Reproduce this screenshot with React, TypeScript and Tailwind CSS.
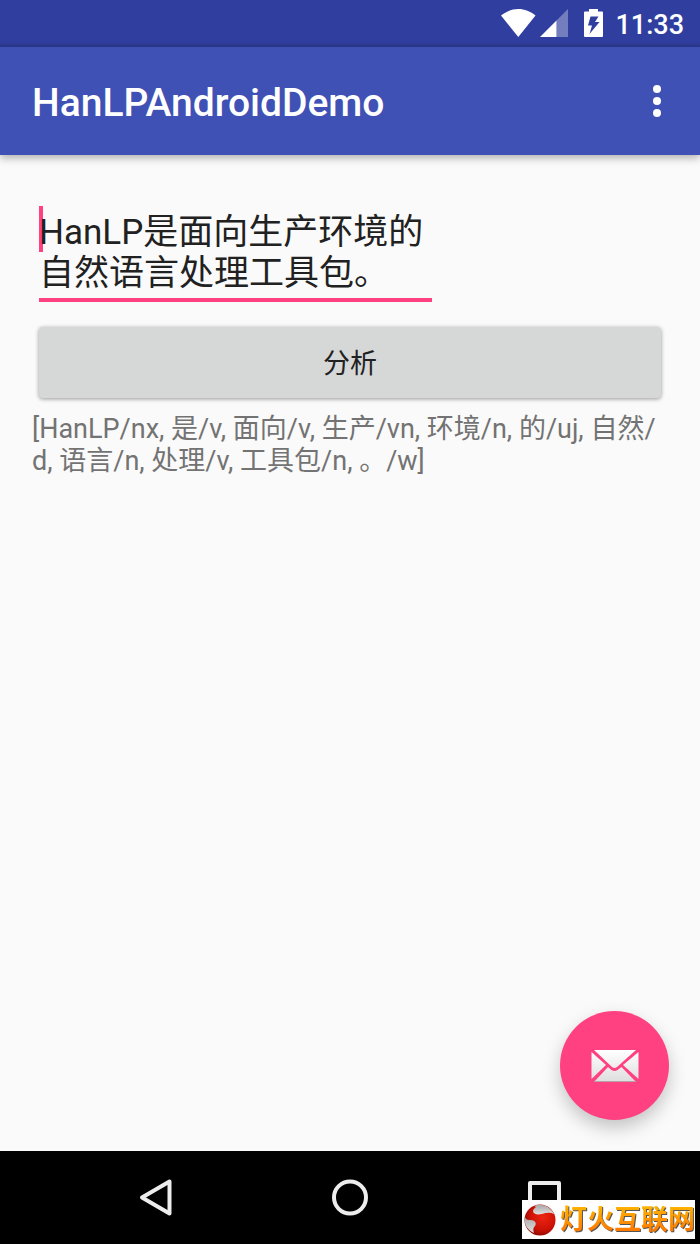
import { useState } from "react";

const RESULT =
  "[HanLP/nx, 是/v, 面向/v, 生产/vn, 环境/n, 的/uj, 自然/d, 语言/n, 处理/v, 工具包/n, 。/w]";

function StatusBar() {
  return (
    <div className="h-[47px] shrink-0 bg-gradient-to-b from-[#303f9f] from-90% to-[#2a378b] pr-4 pb-0.5 flex items-center justify-end text-white">
      <svg className="w-[35px] h-7" viewBox="0 0 35 28" fill="currentColor" aria-label="Wi-Fi">
        <path d="M0 6.600C5 2.400 11 0 17.300 0S29.600 2.400 34.500 6.600L17.300 28Z" />
      </svg>
      <svg className="ml-1 w-7 h-7" viewBox="0 0 28 28" fill="currentColor" aria-label="Signal">
        <path d="M28 0V28H16.500V11.500Z" opacity=".33" />
        <path d="M0 28L16.500 11.500V28Z" />
      </svg>
      <svg className="ml-4 w-[19px] h-7" viewBox="0 0 19 28" fill="currentColor" aria-label="Battery">
        <path
          fillRule="evenodd"
          d="M5 0H14V2.500H18Q19 2.500 19 3.500V27Q19 28 18 28H1Q0 28 0 27V3.500Q0 2.500 1 2.500H5ZM6.500 7.500L4 16.500H8L5.500 25L15.500 13H11L14.500 7.500Z"
        />
      </svg>
      <span className="ml-3 pt-1 text-[27px] leading-8 font-medium">11:33</span>
    </div>
  );
}

function Toolbar() {
  return (
    <header className="relative h-[108px] shrink-0 bg-[#3f51b5] pl-8 pr-7 flex items-center justify-between text-white shadow-[0_3px_8px_rgba(0,0,0,0.3)]">
      <h1 className="pt-1 text-[39px] leading-[46px] font-medium">HanLPAndroidDemo</h1>
      <button type="button" aria-label="More options" className="w-[30px] h-12 flex items-center justify-center">
        <svg className="w-2 h-8" viewBox="0 0 8 32" fill="currentColor">
          <circle cx="4" cy="4" r="4" />
          <circle cx="4" cy="16" r="4" />
          <circle cx="4" cy="28" r="4" />
        </svg>
      </button>
    </header>
  );
}

function MailIcon() {
  return (
    <svg className="w-12 h-8" viewBox="0 0 48 32">
      <defs>
        <linearGradient id="paper" x1="0" y1="0" x2="0" y2="32" gradientUnits="userSpaceOnUse">
          <stop offset="0" stopColor="#fff" />
          <stop offset="1" stopColor="#dedede" />
        </linearGradient>
      </defs>
      <g fill="url(#paper)">
        <path d="M3 0H45L26 17Q23.500 19 21 17Z" />
        <path d="M.5 2L15 15L.5 29Z" />
        <path d="M47.500 2L32 15L47.500 29Z" />
        <path d="M3 32L17 17L20.500 20Q23.500 22 26.500 20L30.500 17L45 32Z" />
      </g>
      <path d="M3 31.500H45" stroke="#b5a3a9" />
    </svg>
  );
}

function Watermark() {
  return (
    <div className="absolute right-[5px] bottom-[5px] h-[39px] w-[173px] bg-white pl-0.5 flex items-center">
      <svg className="w-8 h-8 shrink-0" viewBox="0 0 32 32">
        <defs>
          <radialGradient id="red" cx=".6" cy=".4" r=".7">
            <stop offset="0" stopColor="#ee2412" />
            <stop offset=".6" stopColor="#cc1206" />
            <stop offset="1" stopColor="#7d0700" />
          </radialGradient>
          <linearGradient id="silver" x1="0" y1="0" x2="0" y2="1">
            <stop offset="0" stopColor="#a8a8a8" />
            <stop offset="1" stopColor="#dedede" />
          </linearGradient>
        </defs>
        <circle cx="16" cy="16" r="15.500" fill="url(#red)" />
        <path d="M10 2C17-1 26 2 30 10C26 8 22 9 18 10C13 11 9 10 9 7C9 5 11 4 12 3Z" fill="url(#silver)" />
        <path d="M1 12C1 15 3 16 6 16C11 16 13 19 11 22C9 24 9 26 10 29C4 27-1 20 1 12Z" fill="url(#silver)" />
      </svg>
      <span className="ml-1 whitespace-nowrap text-[27px] leading-8 font-bold text-transparent bg-clip-text bg-gradient-to-b from-[#ffb800] to-[#ff6a00] drop-shadow-[1px_1px_0_#555]">
        灯火互联网
      </span>
    </div>
  );
}

function NavigationBar() {
  return (
    <nav className="relative h-[93px] shrink-0 bg-black flex items-center justify-center gap-[154px] text-[#ededed]">
      <button type="button" aria-label="Back">
        <svg className="w-10 h-10" viewBox="0 0 40 40" fill="none" stroke="currentColor" strokeWidth="4" strokeLinejoin="round">
          <path d="M6 19.500L33.500 3.500V35.500Z" />
        </svg>
      </button>
      <button type="button" aria-label="Home">
        <svg className="w-10 h-10" viewBox="0 0 40 40" fill="none" stroke="currentColor" strokeWidth="4">
          <circle cx="20" cy="19.500" r="16" />
        </svg>
      </button>
      <button type="button" aria-label="Recent apps">
        <svg className="w-10 h-10" viewBox="0 0 40 40" fill="none" stroke="currentColor" strokeWidth="4" strokeLinejoin="round">
          <rect x="6" y="5" width="29" height="29" />
        </svg>
      </button>
      <Watermark />
    </nav>
  );
}

export default function App() {
  const [text, setText] = useState("HanLP是面向生产环境的自然语言处理工具包。");

  return (
    <div className="min-h-screen flex flex-col bg-[#fafafa] font-[Roboto,'Noto_Sans_CJK_SC',sans-serif]">
      <StatusBar />
      <Toolbar />

      <main className="relative grow px-8 pt-[51px]">
        <div className="px-[7px]">
          <div className="relative w-[393px] max-w-full">
            {/* Text cursor */}
            <span className="absolute left-0 top-0 w-1 h-[46px] bg-[#ff4081]" />
            <textarea
              aria-label="Text to analyse"
              rows={2}
              spellCheck={false}
              value={text}
              onChange={(e) => setText(e.target.value)}
              className="relative block w-full h-24 pt-1.5 border-b-4 border-[#ff4081] bg-transparent resize-none overflow-hidden outline-none text-[35px] leading-[41px] text-[#212121]"
            />
          </div>
          <button
            type="button"
            className="mt-[25px] w-full h-[71px] pt-0.5 rounded bg-[#d6d7d7] text-[27px] leading-8 text-[#212121] shadow-[0_1px_4px_rgba(0,0,0,0.4)]"
          >
            分析
          </button>
        </div>
        <p className="mt-[15px] text-[27px] leading-8 text-[#737373] break-all">{RESULT}</p>

        <button
          type="button"
          aria-label="Send mail"
          className="absolute right-[31px] bottom-[31px] w-[109px] h-[109px] rounded-full bg-[#ff4081] flex items-center justify-center shadow-[0_8px_18px_rgba(0,0,0,0.22)]"
        >
          <MailIcon />
        </button>
      </main>

      <NavigationBar />
    </div>
  );
}
